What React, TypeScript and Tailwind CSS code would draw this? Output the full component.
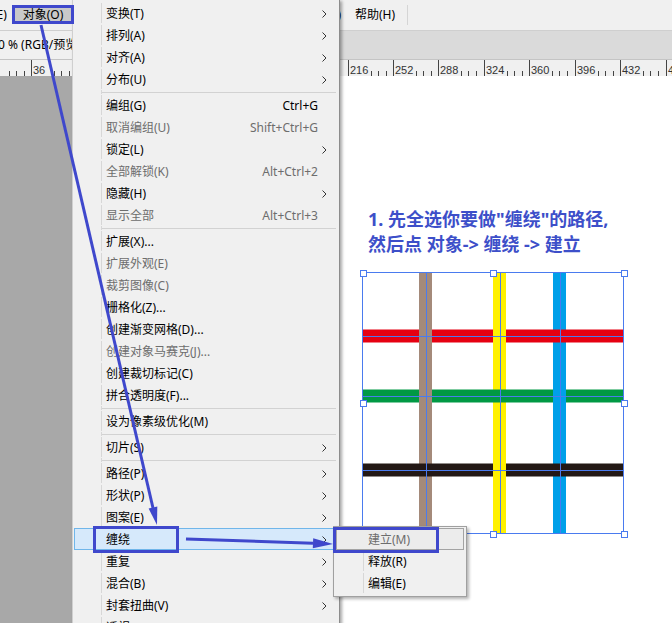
import React from 'react';

type Item = { label: string; keys?: string; sub?: boolean; disabled?: boolean; active?: boolean };

const groups: Item[][] = [
  [
    { label: '变换(T)', sub: true },
    { label: '排列(A)', sub: true },
    { label: '对齐(A)', sub: true },
    { label: '分布(U)', sub: true },
  ],
  [
    { label: '编组(G)', keys: 'Ctrl+G' },
    { label: '取消编组(U)', keys: 'Shift+Ctrl+G', disabled: true },
    { label: '锁定(L)', sub: true },
    { label: '全部解锁(K)', keys: 'Alt+Ctrl+2', disabled: true },
    { label: '隐藏(H)', sub: true },
    { label: '显示全部', keys: 'Alt+Ctrl+3', disabled: true },
  ],
  [
    { label: '扩展(X)...' },
    { label: '扩展外观(E)', disabled: true },
    { label: '裁剪图像(C)', disabled: true },
    { label: '栅格化(Z)...' },
    { label: '创建渐变网格(D)...' },
    { label: '创建对象马赛克(J)...', disabled: true },
    { label: '创建裁切标记(C)' },
    { label: '拼合透明度(F)...' },
  ],
  [{ label: '设为像素级优化(M)' }],
  [{ label: '切片(S)', sub: true }],
  [
    { label: '路径(P)', sub: true },
    { label: '形状(P)', sub: true },
    { label: '图案(E)', sub: true },
    { label: '缠绕', sub: true, active: true },
    { label: '重复', sub: true },
    { label: '混合(B)', sub: true },
    { label: '封套扭曲(V)', sub: true },
    { label: '透视(P)', sub: true },
  ],
];

const subItems: Item[] = [
  { label: '建立(M)', disabled: true, active: true },
  { label: '释放(R)' },
  { label: '编辑(E)' },
];

function Chevron() {
  return (
    <svg width="5" height="8" viewBox="0 0 5 8" className="block">
      <polyline points="0.5,0.5 4,4 0.5,7.5" fill="none" stroke="#333" strokeWidth="1" />
    </svg>
  );
}

function MenuRow({ item }: { item: Item }) {
  return (
    <div
      className={
        item.active
          ? 'mx-px flex h-[22px] items-center border border-[#70b6ea] bg-[#d6e9fb]'
          : 'mx-px flex h-[22px] items-center border border-transparent'
      }
    >
      <div
        className={
          item.active
            ? 'h-full w-[27px] shrink-0 border-r border-transparent'
            : 'h-full w-[27px] shrink-0 border-r border-[#d7d7d7]'
        }
      />
      <span
        className={
          item.disabled
            ? 'flex h-full flex-1 items-center pl-[4px] pt-[2px] text-[#6d6d6d]'
            : 'flex h-full flex-1 items-center pl-[4px] pt-[2px] text-black'
        }
      >
        {item.label}
      </span>
      {item.keys && (
        <span
          className={
            item.disabled
              ? 'flex h-full items-center pt-[2px] text-[#6d6d6d]'
              : 'flex h-full items-center pt-[2px] text-black'
          }
        >
          {item.keys}
        </span>
      )}
      <div className="flex h-full w-[19px] shrink-0 items-center pl-[4px] pt-px">{item.sub && <Chevron />}</div>
    </div>
  );
}

function Separator() {
  return (
    <div className="mx-px flex h-[4px]">
      <div className="h-full w-[28px] shrink-0 border-r border-[#d7d7d7]" />
      <div className="mr-[2px] h-px flex-1 self-center bg-[#d2d2d2]" />
    </div>
  );
}

function ObjectMenu() {
  return (
    <div className="absolute left-[72px] top-0 h-[640px] w-[268px] border-l border-r border-l-[#cfcfcf] border-r-[#8c8c8c] bg-[#f0f0f0] pt-[2px] text-[12px] shadow-[2px_1px_3px_rgba(0,0,0,0.35)]">
      {groups.map((g, gi) => (
        <div key={gi}>
          {gi > 0 && <Separator />}
          {g.map((it) => (
            <MenuRow key={it.label} item={it} />
          ))}
        </div>
      ))}
    </div>
  );
}

function WrapSubmenu() {
  return (
    <div className="absolute left-[333px] top-[526px] w-[134px] border border-[#a0a0a0] bg-[#f0f0f0] pb-[2px] pt-px text-[12px] shadow-[2px_2px_3px_rgba(0,0,0,0.3)]">
      {subItems.map((it) => (
        <div
          key={it.label}
          className={
            it.active
              ? 'mx-[2px] flex h-[22px] items-center border border-[#a3a3a3] bg-[#ececec]'
              : 'mx-[2px] flex h-[22px] items-center border border-transparent'
          }
        >
          <div
            className={
              it.active
                ? 'h-full w-[27px] shrink-0 border-r border-transparent'
                : 'h-full w-[27px] shrink-0 border-r border-[#d7d7d7]'
            }
          />
          <span
            className={
              it.disabled
                ? 'flex h-full items-center pl-[4px] pt-[2px] text-[#6d6d6d]'
                : 'flex h-full items-center pl-[4px] pt-[2px] text-black'
            }
          >
            {it.label}
          </span>
        </div>
      ))}
    </div>
  );
}

function Ruler() {
  const majors = [
    { x: -14, label: 0 },
    { x: 31, label: 36 },
    ...Array.from({ length: 8 }, (_, k) => ({ x: Math.floor(348 + 45.45 * k), label: 216 + 36 * k })),
  ];
  return (
    <svg width="672" height="16" className="block bg-[#f0f0f0]">
      {majors.map((m) => (
        <g key={m.label}>
          <line x1={m.x + 0.5} x2={m.x + 0.5} y1={0} y2={16} stroke="#444" />
          <text x={m.x + 2} y={14} fontSize={11} fill="#333" fontFamily="Liberation Sans, sans-serif">
            {m.label}
          </text>
          {[3, 4, 5].map((i) => {
            const x = Math.round(m.x + 7.575 * i) + 0.5;
            return <line key={i} x1={x} x2={x} y1={11} y2={16} stroke="#444" />;
          })}
        </g>
      ))}
    </svg>
  );
}

const SEL = '#4a7bef';

function WeaveArt() {
  const verts = [
    { x: 61, c: 68.5, fill: '#a48a7a' },
    { x: 135, c: 142.5, fill: '#fff100' },
    { x: 195, c: 202.5, fill: '#00a0e9' },
  ];
  const hors = [
    { y: 61.5, c: 68.5, fill: '#e60012' },
    { y: 121.5, c: 128.5, fill: '#009944' },
    { y: 195.5, c: 202.5, fill: '#231815' },
  ];
  // which vertical stripe lies on top at each crossing [row][col]
  const vOver = [
    [true, true, false],
    [true, false, true],
    [false, true, false],
  ];
  const handles = [
    [4.5, 4.5],
    [135, 4.5],
    [265.5, 4.5],
    [4.5, 135],
    [265.5, 135],
    [4.5, 265.5],
    [135, 265.5],
    [265.5, 265.5],
  ];
  return (
    <svg width="270" height="270" className="block">
      {verts.map((v) => (
        <rect key={v.x} x={v.x} y={4.5} width={13} height={261} fill={v.fill} />
      ))}
      {hors.map((h) => (
        <rect key={h.y} x={4.5} y={h.y} width={261} height={13} fill={h.fill} />
      ))}
      {hors.map((h, r) =>
        verts.map((v, c) =>
          vOver[r][c] ? <rect key={`${r}-${c}`} x={v.x} y={h.y - 0.5} width={13} height={14} fill={v.fill} /> : null,
        ),
      )}
      <rect x={4.5} y={4.5} width={261} height={261} fill="none" stroke={SEL} />
      {verts.map((v) => (
        <line key={v.c} x1={v.c} x2={v.c} y1={4.5} y2={265.5} stroke={SEL} />
      ))}
      {hors.map((h) => (
        <line key={h.c} x1={4.5} x2={265.5} y1={h.c} y2={h.c} stroke={SEL} />
      ))}
      {handles.map(([x, y]) => (
        <rect key={`${x}-${y}`} x={Math.round(x) - 2.5} y={Math.round(y) - 2.5} width={6} height={6} fill="#fff" stroke={SEL} />
      ))}
    </svg>
  );
}

function Arrows() {
  return (
    <svg width="672" height="623" className="pointer-events-none absolute left-0 top-0">
      <line x1={41} y1={25} x2={153} y2={508} stroke="#3f48cc" strokeWidth={3} />
      <polygon points="148.6,508.5 157.3,506.5 157,525" fill="#3f48cc" />
      <line x1={186} y1={539} x2={313} y2={543.3} stroke="#3f48cc" strokeWidth={3} />
      <polygon points="313.2,538.3 312.8,548.3 333,544" fill="#3f48cc" />
    </svg>
  );
}

export default function App() {
  return (
    <div className="relative h-[623px] w-[672px] overflow-hidden bg-white font-['Noto_Sans','Noto_Sans_CJK_SC',sans-serif] text-[12px] text-black">
      {/* menu bar */}
      <div className="flex h-[30px] items-center bg-[#f0f0f0]">
        <span className="-ml-[7px] w-[21px] shrink-0">(E)</span>
        <div className="flex h-[17px] w-[58px] shrink-0 items-center justify-center bg-[#c9c9c9]">对象(O)</div>
        <div className="flex w-[269px] shrink-0 justify-end">窗口(W)</div>
        <span className="ml-[14px]">帮助(H)</span>
        <div className="ml-[12px] h-[20px] w-px bg-[#d5d5d5]" />
      </div>

      {/* document tabs */}
      <div className="flex h-[30px] border-y border-t-[#cfcfcf] border-b-[#c4c4c4] bg-[#dadada]">
        <div className="-ml-[2px] flex w-[330px] items-center bg-[#f0f0f0] pl-0">0 % (RGB/预览)</div>
      </div>

      <Ruler />

      {/* workspace */}
      <div className="flex h-[547px]">
        <div className="w-[72px] shrink-0 bg-[#a8a8a8]" />
        <div className="flex flex-1 flex-col bg-white pl-[286px] pt-[131px]">
          <div className="ml-[10px] whitespace-nowrap text-[18px] font-bold leading-[25px] text-[#3d4fc9]">
            <div>1. 先全选你要做"缠绕"的路径,</div>
            <div>然后点 对象-&gt; 缠绕 -&gt; 建立</div>
          </div>
          <div className="mt-[11px]">
            <WeaveArt />
          </div>
        </div>
      </div>

      <ObjectMenu />
      <WrapSubmenu />

      {/* annotation boxes */}
      <div className="absolute left-[12px] top-[5px] h-[19px] w-[62px] border-[3px] border-[#3f48cc]" />
      <div className="absolute left-[93px] top-[526px] h-[27px] w-[86px] border-[3px] border-[#3f48cc]" />
      <div className="absolute left-[333px] top-[527px] h-[26px] w-[106px] border-[3px] border-[#3f48cc]" />
      <Arrows />
    </div>
  );
}
